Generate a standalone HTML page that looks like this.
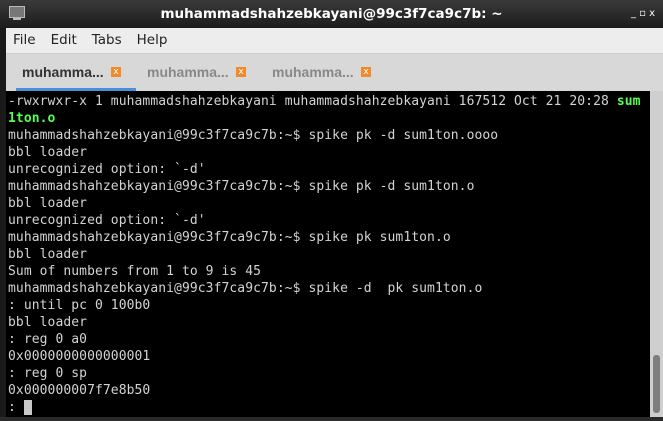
<!DOCTYPE html>
<html><head><style>
body{margin:0;width:663px;height:421px;overflow:hidden;background:#1a1a1a;position:relative;font-family:"DejaVu Sans",sans-serif}
#title{position:absolute;left:0;top:0;width:663px;height:28px;background:linear-gradient(#3a3a3a,#1c1c1c);color:#fff;font-weight:bold;font-size:13.5px;text-align:center;line-height:28px}
#menu{position:absolute;left:6px;top:28px;width:657px;height:25px;background:#ededed;font-size:13.5px;line-height:25px;color:#222;border-bottom:1px solid #ccc}
#menu span{margin-left:7px;margin-right:8px}
#tabs{position:absolute;left:6px;top:54px;width:657px;height:37px;background:#d8d8d8}
.tab{position:absolute;top:10px;font-family:"Liberation Sans",sans-serif;font-size:14px;font-weight:bold;color:#888;white-space:nowrap}
.x{position:absolute;top:13px;width:10px;height:10px;background:#f08a2a;color:#fff;font-size:9px;line-height:10px;text-align:center}
#under{position:absolute;left:10px;top:34px;width:120px;height:3px;background:#4a8fd8}
#term{position:absolute;left:6px;top:93px;width:644px;height:323px;background:#000;font-family:"DejaVu Sans Mono",monospace;font-size:13px;letter-spacing:0.08px;line-height:17px;color:#d3d3d3;white-space:pre;padding-left:2px;overflow:hidden}
#termbg{position:absolute;left:6px;top:91px;width:644px;height:326px;background:#000}
.g{color:#54ff54;font-weight:bold}
#sb{position:absolute;left:650px;top:91px;width:13px;height:326px;background:#cfcfcf}
#th{position:absolute;left:3px;top:264px;width:7px;height:58px;background:#7e7e7e;border-radius:3px}
#bot{position:absolute;left:0;top:417px;width:663px;height:4px;background:#2a2a2a}
</style></head><body>
<div id="title"><span style="position:absolute;left:9px;top:6px;width:14px;height:10px;background:#777;border:1px solid #bbb"></span><span style="position:absolute;left:13px;top:18px;width:8px;height:2px;background:#bbb"></span>muhammadshahzebkayani@99c3f7ca9c7b: ~<span style="position:absolute;right:8px;top:0;font-size:10px;font-weight:normal">_ &#9643; x</span></div>
<div id="menu"><span>File</span><span>Edit</span><span>Tabs</span><span>Help</span></div>
<div id="tabs">
<div class="tab" style="left:16px;color:#333">muhamma...</div><div class="x" style="left:105px">x</div>
<div class="tab" style="left:141px">muhamma...</div><div class="x" style="left:230px">x</div>
<div class="tab" style="left:266px">muhamma...</div><div class="x" style="left:355px">x</div>
<div id="under"></div>
</div>
<div id="termbg"></div>
<div id="term">-rwxrwxr-x 1 muhammadshahzebkayani muhammadshahzebkayani 167512 Oct 21 20:28 <span class="g">sum</span>
<span class="g">1ton.o</span>
muhammadshahzebkayani@99c3f7ca9c7b:~$ spike pk -d sum1ton.oooo
bbl loader
unrecognized option: `-d'
muhammadshahzebkayani@99c3f7ca9c7b:~$ spike pk -d sum1ton.o
bbl loader
unrecognized option: `-d'
muhammadshahzebkayani@99c3f7ca9c7b:~$ spike pk sum1ton.o
bbl loader
Sum of numbers from 1 to 9 is 45
muhammadshahzebkayani@99c3f7ca9c7b:~$ spike -d  pk sum1ton.o
: until pc 0 100b0
bbl loader
: reg 0 a0
0x0000000000000001
: reg 0 sp
0x000000007f7e8b50
: <span style="background:#c8c8c8"> </span></div>
<div id="sb"><div id="th"></div></div>
<div id="bot"></div>
</body></html>
